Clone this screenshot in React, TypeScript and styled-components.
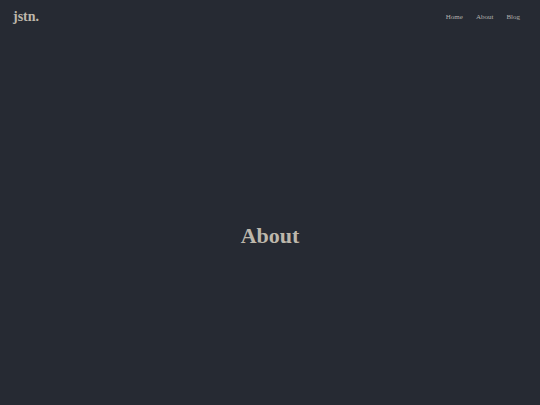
import React from 'react'
import styled, { createGlobalStyle } from 'styled-components'

const GlobalStyle = createGlobalStyle`
  html, body {
    margin: 0;
    padding: 0;
    background-color: #262a33;
    font-family: "Liberation Serif", "Times New Roman", serif;
  }
`

const Header = styled.header`
  display: flex;
  align-items: center;
  justify-content: space-between;
  height: 33px;
  padding: 0 20px 0 13px;
`

const Logo = styled.a`
  font-size: 14px;
  font-weight: bold;
  color: #bdb7ab;
  text-decoration: none;
`

const Nav = styled.nav`
  display: flex;
  gap: 13px;
`

const NavLink = styled.a`
  font-size: 7px;
  color: #b3b1ad;
  text-decoration: none;
`

const Main = styled.main`
  display: flex;
  align-items: center;
  justify-content: center;
  min-height: 100vh;
`

const Title = styled.h1`
  margin: 0;
  font-size: 22px;
  font-weight: bold;
  color: #bdb7ab;
`

const App: React.FC = () => {
  return (
    <>
      <GlobalStyle />
      <Header>
        <Logo href="#">jstn.</Logo>
        <Nav>
          <NavLink href="#">Home</NavLink>
          <NavLink href="#">About</NavLink>
          <NavLink href="#">Blog</NavLink>
        </Nav>
      </Header>
      <Main>
        <Title>About</Title>
      </Main>
    </>
  )
}

export default App
